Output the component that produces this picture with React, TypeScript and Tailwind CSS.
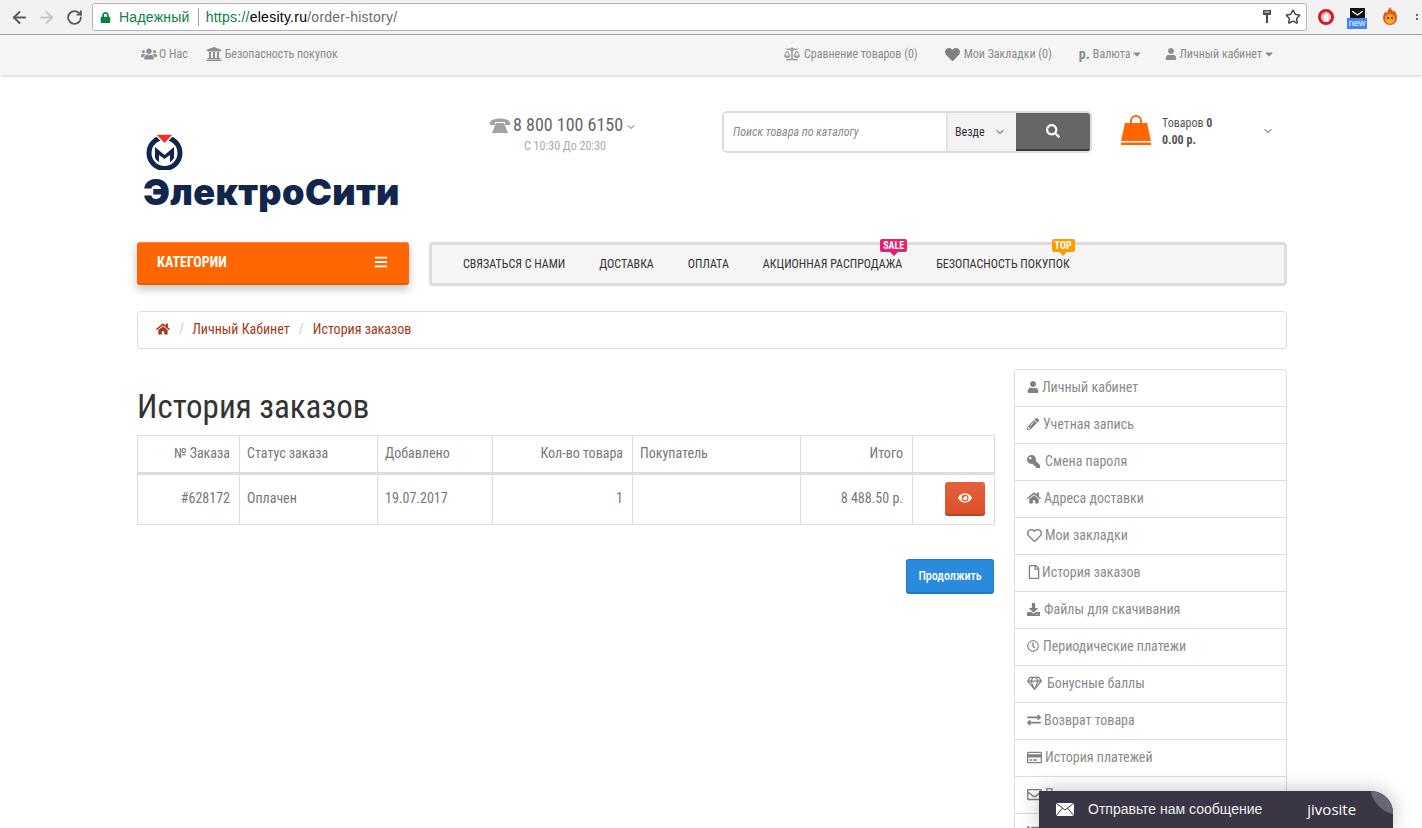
import React from 'react';
import { ArrowLeft, ArrowRight, RotateCw, Star, ChevronDown } from 'lucide-react';
import {
  FaUsers, FaUniversity, FaBalanceScale, FaHeart, FaUser, FaCaretDown, FaSearch, FaBars, FaHome,
  FaPencilAlt, FaKey, FaRegHeart, FaRegFile, FaDownload, FaRegClock, FaRegGem, FaExchangeAlt,
  FaRegCreditCard, FaRegEnvelope, FaEye, FaLock, FaList,
} from 'react-icons/fa';

const sideItems = [
  { icon: <FaUser size={12} />, box: 'w-[15px]', label: 'Личный кабинет' },
  { icon: <FaPencilAlt size={12} />, box: 'w-[16px]', label: 'Учетная запись' },
  { icon: <FaKey size={13} className="-scale-x-100" />, box: 'w-[18px]', label: 'Смена пароля' },
  { icon: <FaHome size={14} />, box: 'w-[17px]', label: 'Адреса доставки' },
  { icon: <FaRegHeart size={15} />, box: 'w-[18px]', label: 'Мои закладки' },
  { icon: <FaRegFile size={14} />, box: 'w-[15px]', label: 'История заказов' },
  { icon: <FaDownload size={13} />, box: 'w-[17px]', label: 'Файлы для скачивания' },
  { icon: <FaRegClock size={12} />, box: 'w-[16px]', label: 'Периодические платежи' },
  { icon: <FaRegGem size={15} />, box: 'w-[20px]', label: 'Бонусные баллы' },
  { icon: <FaExchangeAlt size={14} />, box: 'w-[17px]', label: 'Возврат товара' },
  { icon: <FaRegCreditCard size={15} />, box: 'w-[18px]', label: 'История платежей' },
  { icon: <FaRegEnvelope size={15} />, box: 'w-[18px]', label: 'Подписка на новости' },
  { icon: <FaList size={13} />, box: 'w-[17px]', label: 'Выход' },
];

const menuItems = [
  { label: 'СВЯЗАТЬСЯ С НАМИ' },
  { label: 'ДОСТАВКА' },
  { label: 'ОПЛАТА' },
  { label: 'АКЦИОННАЯ РАСПРОДАЖА', badge: 'SALE', badgeBg: 'bg-[#e5206f]', badgeBorder: 'border-t-[#e5206f]' },
  { label: 'БЕЗОПАСНОСТЬ ПОКУПОК', badge: 'TOP', badgeBg: 'bg-[#ff9c00]', badgeBorder: 'border-t-[#ff9c00]' },
];

function BrowserBar() {
  return (
    <div className="h-[35px] bg-[#f2f2f2] border-b border-[#a9a9a9] flex items-center pl-[10px]">
      <ArrowLeft size={19} strokeWidth={2.5} className="text-[#5a5a5a]" />
      <ArrowRight size={19} strokeWidth={2.5} className="text-[#c9c9c9] ml-[8px]" />
      <RotateCw size={17} strokeWidth={2.6} className="text-[#5a5a5a] ml-[10px]" />
      <div className="ml-[9px] w-[1215px] h-[28px] bg-white border border-[#b5b5b5] rounded-[3px] flex items-center pl-[7px] pr-[5px] font-['Liberation_Sans',sans-serif] font-stretch-normal text-[14px] tracking-[0.25px]">
        <FaLock size={11} className="text-[#0b8043]" />
        <span className="ml-[8px] text-[#0b8043]">Надежный</span>
        <span className="ml-[8px] h-[18px] border-l border-[#9e9e9e]" />
        <span className="ml-[7px] text-[#0b8043]">https://</span>
        <span className="text-black">elesity.ru</span>
        <span className="text-[#6b6b6b]">/order-history/</span>
        <svg width="8" height="13" viewBox="0 0 8 13" className="ml-auto mr-[14px] -mt-[2px]">
          <path d="M0 0h8v5H5v8H3V5H0z" fill="#4a4a4a" />
          <rect x="1.500" y="1.500" width="5" height="1" fill="#fff" />
        </svg>
        <Star size={16} strokeWidth={2.2} className="text-[#444]" />
      </div>
      <svg width="18" height="18" viewBox="0 0 18 18" className="ml-[10px]">
        <circle cx="9" cy="9" r="6.500" fill="none" stroke="#e0161d" strokeWidth="3" />
        <path d="M6 14V6.500a1 1 0 0 1 2 0V4.500a1 1 0 0 1 2 0v1a1 1 0 0 1 2 0V14z" fill="#fff" stroke="#e0161d" strokeWidth="0.4" />
      </svg>
      <div className="ml-[12px] w-[20px] h-[22px] flex flex-col items-center relative top-[2px]">
        <div className="w-[15px] h-[10px] bg-[#111] flex items-center justify-center">
          <svg width="11" height="5" viewBox="0 0 11 5"><path d="M0 0l5.500 4L11 0" stroke="#fff" strokeWidth="1.300" fill="none" /></svg>
        </div>
        <div className="w-[20px] h-[11px] bg-[#4285f4] text-white text-[9px] leading-[11px] text-center font-['Liberation_Sans',sans-serif] font-stretch-normal">new</div>
      </div>
      <svg width="18" height="20" viewBox="0 0 18 20" className="ml-[14px]">
        <path d="M9 0c1 3 3 3 3 5 1-1 1-2 1-2 2 2 3 5 3 8a7 7 0 0 1-14 0c0-3 1-5 3-7 0 1 0 2 1 2 0-2 2-4 3-6z" fill="#e8541c" />
        <circle cx="9" cy="12" r="5" fill="#f5a623" />
        <circle cx="7" cy="11" r="1" fill="#222" />
        <circle cx="11" cy="11" r="1" fill="#222" />
      </svg>
      <div className="ml-[17px] flex flex-col gap-[2px]">
        <span className="w-[2px] h-[2px] bg-[#666]" />
        <span className="w-[2px] h-[2px] bg-[#666]" />
      </div>
    </div>
  );
}

function TopLinks() {
  return (
    <div className="h-[40px] bg-[#f5f5f5] shadow-[0_1px_3px_rgba(0,0,0,0.2)] text-[12px] text-[#8a8a8a]">
      <div className="w-[1150px] ml-[137px] h-full flex items-center justify-between pl-[4px] pr-[12px] pb-[2px]">
        <div className="flex items-center">
          <FaUsers size={16} className="text-[#8f8f8f]" />
          <span className="ml-[2px]">О Нас</span>
          <FaUniversity size={16} className="text-[#8f8f8f] ml-[18px]" />
          <span className="ml-[3px]">Безопасность покупок</span>
        </div>
        <div className="flex items-center">
          <FaBalanceScale size={16} className="text-[#a0a0a0]" />
          <span className="ml-[4px]">Сравнение товаров (0)</span>
          <FaHeart size={15} className="text-[#808080] ml-[27px]" />
          <span className="ml-[4px]">Мои Закладки (0)</span>
          <span className="ml-[27px] font-bold text-[14px]">р.</span>
          <span className="ml-[3px]">Валюта</span>
          <FaCaretDown size={12} className="ml-[1px]" />
          <FaUser size={12} className="text-[#8f8f8f] ml-[22px]" />
          <span className="ml-[2px]">Личный кабинет</span>
          <FaCaretDown size={12} className="ml-[1px]" />
        </div>
      </div>
    </div>
  );
}

function Logo() {
  return (
    <div className="w-[262px] pl-[6px]">
      <svg width="37" height="37" viewBox="0 0 37 37" className="ml-[3px]">
        <circle cx="18.500" cy="20" r="15.500" fill="none" stroke="#12264d" strokeWidth="5" />
        <path d="M9 1h19l-9.500 10z" fill="#ee3124" stroke="#fff" strokeWidth="1.500" />
        <path d="M9 14l9.500 8L28 14v11c-2 3-4 4-4 4v-7l-5.500 4-5.500-4v7s-2-1-4-4z" fill="#12264d" />
      </svg>
      <div className="font-['Inter',sans-serif] font-black text-[36px] leading-[40px] text-[#12264d] mt-[2px] tracking-[0.4px] whitespace-nowrap">ЭлектроСити</div>
    </div>
  );
}

function CartBag() {
  return (
    <svg width="30" height="30" viewBox="0 0 30 30">
      <path d="M10 9V6a5 5 0 0 1 10 0v3" fill="none" stroke="#ff6600" strokeWidth="2" />
      <path d="M4 8h22l4 18H0z" fill="#ff6600" />
      <rect x="0" y="26" width="30" height="1.500" fill="#fff" />
      <rect x="0" y="27.500" width="30" height="2.500" fill="#ff6600" />
    </svg>
  );
}

function Header() {
  return (
    <div className="flex items-start pt-[36px] h-[167px]">
      <div className="pt-[22px]"><Logo /></div>
      <div className="ml-[91px] w-[232px] pt-[1px]">
        <div className="flex items-center text-[#666] text-[18px] leading-[26px]">
          <svg width="20" height="17" viewBox="0 0 20 17" className="mr-[3px]">
            <path d="M0 6c0-6 20-6 20 0v2h-5V5H5v3H0z" fill="#a3a3a3" />
            <path d="M6 6h8l4 10H2z" fill="#a3a3a3" />
          </svg>
          8 800 100 6150
          <ChevronDown size={12} className="ml-[2px] mt-[3px]" />
        </div>
        <div className="text-[12px] leading-[14px] text-[#aaa] pl-[34px] mt-[1px]">С 10:30 До 20:30</div>
      </div>
      <div className="w-[370px] h-[42px] border-2 border-[#dcdcdc] rounded-[5px] flex overflow-hidden">
        <div className="w-[222px] bg-white italic text-[12px] text-[#888] flex items-center pl-[9px]">Поиск товара по каталогу</div>
        <div className="w-[70px] bg-[#f3f3f3] border-l-2 border-[#e4e4e4] text-[12px] text-[#333] flex items-center pl-[7px]">
          Везде
          <ChevronDown size={12} className="ml-[9px]" />
        </div>
        <div className="flex-1 bg-[#666] border-b-2 border-[#3a3a3a] flex items-center justify-center">
          <FaSearch size={14} className="text-white" />
        </div>
      </div>
      <div className="ml-[29px] flex items-start pt-[4px]">
        <CartBag />
        <div className="ml-[11px] text-[12px] leading-[17px] text-[#555]">
          <div>Товаров <b>0</b></div>
          <div className="font-bold">0.00 р.</div>
        </div>
        <ChevronDown size={12} className="text-[#444] ml-[50px] mt-[10px]" />
      </div>
    </div>
  );
}

function NavRow() {
  return (
    <div className="flex gap-[20px]">
      <div className="w-[272px] h-[43px] bg-[#ff6600] border-t border-[#ff8533] border-b-2 border-b-[#e85d00] rounded-[3px] shadow-[0_4px_8px_rgba(0,0,0,0.25)] flex items-center justify-between pl-[20px] pr-[21px] pb-[2px] text-white font-bold text-[14px]">
        КАТЕГОРИИ
        <FaBars size={14} />
      </div>
      <div className="flex-1 h-[44px] bg-[#f5f5f5] border-[3px] border-[#dcdcdc] rounded-[4px] flex items-center pl-[31px] gap-[34px] text-[12px] text-[#333]">
        {menuItems.map((item) => (
          <div key={item.label} className="relative whitespace-nowrap">
            {item.label}
            {item.badge && (
              <div className="absolute -top-[16px] -right-[5px] flex flex-col items-center">
                <span className={`${item.badgeBg} text-white text-[10px] leading-[13px] font-bold px-[3px] rounded-[2px]`}>{item.badge}</span>
                <span className={`w-0 h-0 border-x-[4px] border-x-transparent border-t-[4px] ${item.badgeBorder}`} />
              </div>
            )}
          </div>
        ))}
      </div>
    </div>
  );
}

function OrdersTable() {
  const cell = 'border border-[#ddd] pl-[7px] pr-[9px] pb-[2px]';
  return (
    <table className="w-[857px] table-fixed border-collapse text-[14px] text-[#777]">
      <colgroup>
        <col className="w-[102px]" />
        <col className="w-[138px]" />
        <col className="w-[115px]" />
        <col className="w-[140px]" />
        <col className="w-[168px]" />
        <col className="w-[112px]" />
        <col className="w-[82px]" />
      </colgroup>
      <thead>
        <tr className="h-[38px] border-b-[3px] border-[#ddd]">
          <th className={`${cell} font-normal text-right`}>№ Заказа</th>
          <th className={`${cell} font-normal text-left`}>Статус заказа</th>
          <th className={`${cell} font-normal text-left`}>Добавлено</th>
          <th className={`${cell} font-normal text-right`}>Кол-во товара</th>
          <th className={`${cell} font-normal text-left`}>Покупатель</th>
          <th className={`${cell} font-normal text-right`}>Итого</th>
          <th className={cell} />
        </tr>
      </thead>
      <tbody>
        <tr className="h-[51px]">
          <td className={`${cell} text-right`}>#628172</td>
          <td className={cell}>Оплачен</td>
          <td className={cell}>19.07.2017</td>
          <td className={`${cell} text-right`}>1</td>
          <td className={cell} />
          <td className={`${cell} text-right`}>8 488.50 р.</td>
          <td className={cell}>
            <div className="w-[40px] h-[34px] ml-auto bg-gradient-to-b from-[#e2623c] to-[#dc4f27] border-b-2 border-[#b8431f] rounded-[3px] flex items-center justify-center">
              <FaEye size={14} className="text-white" />
            </div>
          </td>
        </tr>
      </tbody>
    </table>
  );
}

function Sidebar() {
  return (
    <div className="w-[273px] border border-[#ddd] rounded-t-[4px] text-[14px] text-[#8a8a8a]">
      {sideItems.map((item, i) => (
        <div key={item.label} className={`flex items-center pl-[12px] pb-[2px] ${i > 0 ? 'h-[37px] border-t border-[#ddd]' : 'h-[36px]'}`}>
          <span className={`${item.box} shrink-0 text-[#808080]`}>{item.icon}</span>
          {item.label}
        </div>
      ))}
    </div>
  );
}

export default function App() {
  return (
    <div className="relative h-[828px] overflow-hidden bg-white font-['Roboto',sans-serif] font-stretch-condensed">
      <BrowserBar />
      <TopLinks />
      <div className="w-[1150px] ml-[137px]">
        <Header />
        <NavRow />
        <div className="mt-[25px] h-[38px] border border-[#ddd] rounded-[4px] flex items-center pl-[18px] pb-[2px] text-[14px] text-[#a5391c]">
          <FaHome size={14} />
          <span className="ml-[9px] mr-[8px] text-[#ccc]">/</span>
          Личный Кабинет
          <span className="mx-[9px] text-[#ccc]">/</span>
          История заказов
        </div>
        <div className="mt-[20px] flex gap-[20px]">
          <div className="w-[857px]">
            <h1 className="mt-[20px] mb-[10px] text-[33px] leading-[36px] text-[#333]">История заказов</h1>
            <OrdersTable />
            <div className="mt-[34px] flex justify-end">
              <div className="w-[88px] h-[35px] bg-[#2a8bdc] border border-[#1f78c4] border-b-2 rounded-[3px] text-white text-[12px] font-medium flex items-center justify-center">Продолжить</div>
            </div>
          </div>
          <Sidebar />
        </div>
      </div>
      {/* чат виджет */}
      <div className="absolute left-[1039px] top-[791px] w-[354px] h-[37px] bg-[#3b3645] rounded-tr-[22px] shadow-[0_0_20px_rgba(0,0,0,0.25)] flex items-center pl-[17px] text-white font-['Liberation_Sans',sans-serif] font-stretch-normal overflow-hidden">
        <span className="absolute left-[331px] -top-[36px] w-[60px] h-[60px] rounded-full bg-[#6b6675]" />
        <svg width="18" height="13" viewBox="0 0 18 13">
          <rect width="18" height="13" fill="#fff" />
          <path d="M0 0l9 7 9-7M0 13l6.500-8M18 13l-6.500-8" stroke="#3b3645" strokeWidth="1" fill="none" />
        </svg>
        <span className="ml-[14px] text-[14px] text-[#eee]">Отправьте нам сообщение</span>
        <span className="relative ml-[45px] text-[15px] font-['Open_Sans',sans-serif]">jivosite</span>
      </div>
    </div>
  );
}
